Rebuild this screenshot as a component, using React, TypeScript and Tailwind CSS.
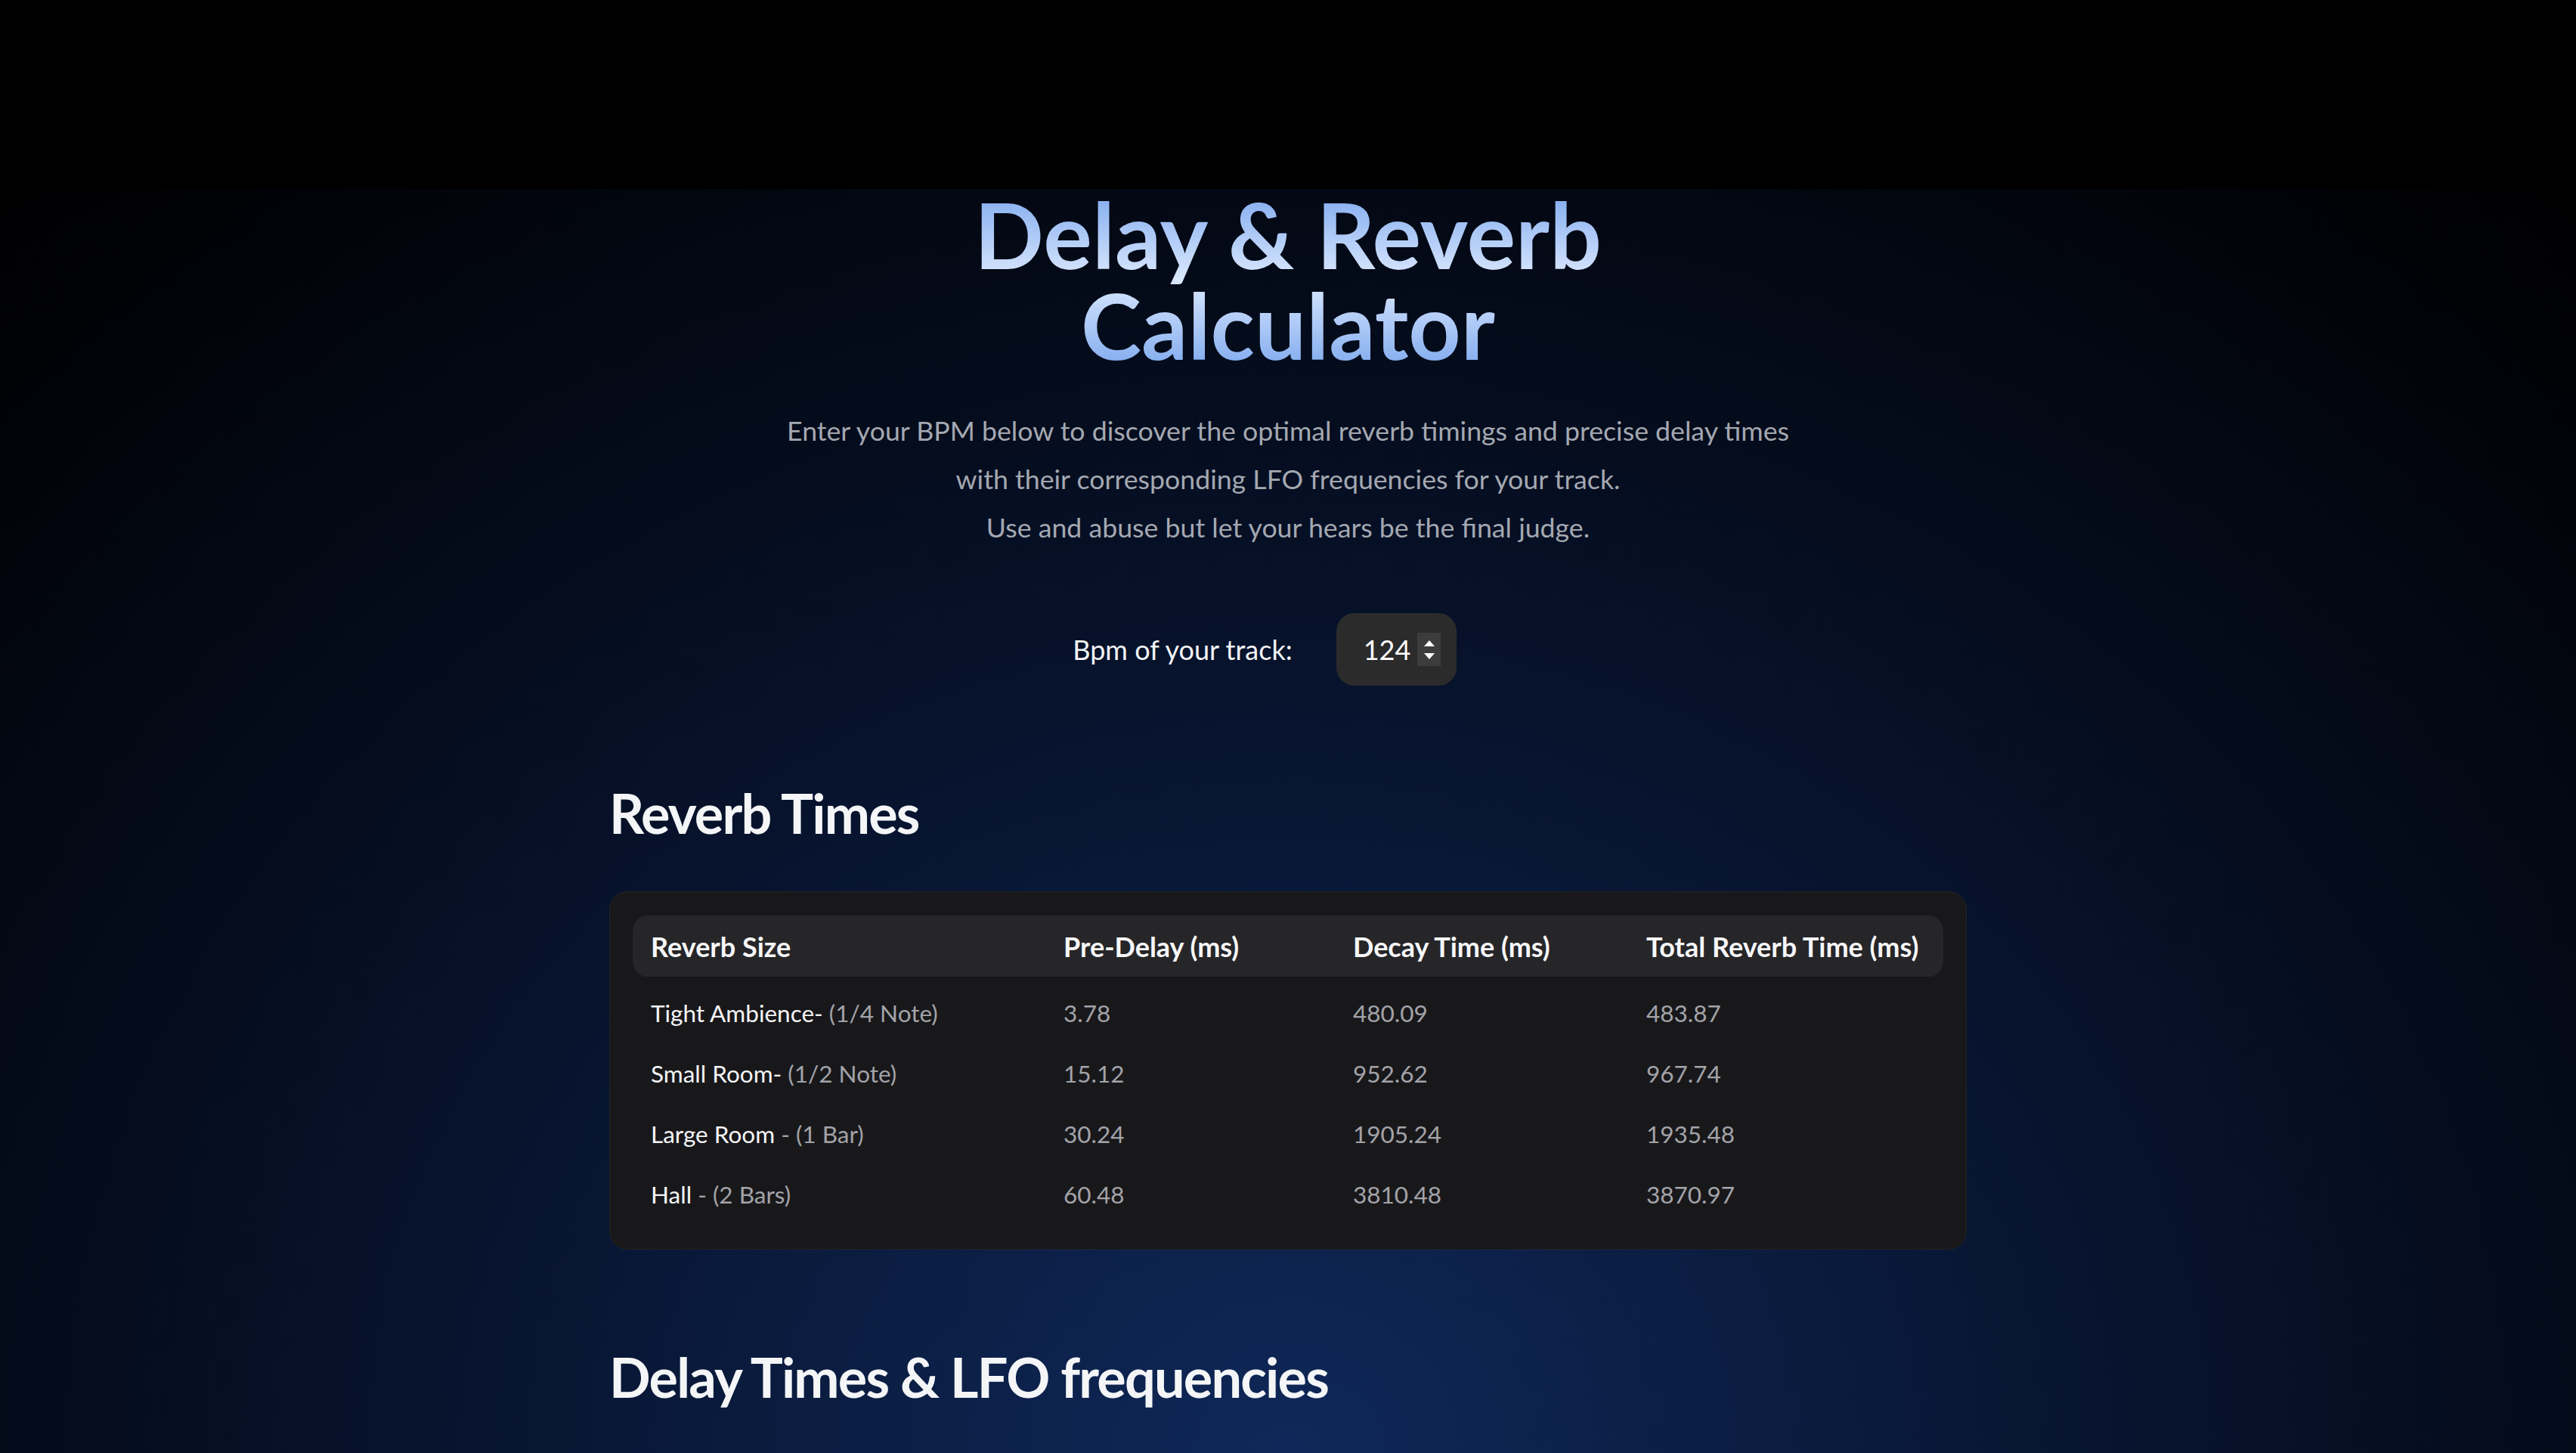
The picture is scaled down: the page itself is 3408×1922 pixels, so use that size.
import React from "react";

const rows = [
  { name: "Tight Ambience-", note: " (1/4 Note)", pre: "3.78", decay: "480.09", total: "483.87" },
  { name: "Small Room-", note: " (1/2 Note)", pre: "15.12", decay: "952.62", total: "967.74" },
  { name: "Large Room", note: " - (1 Bar)", pre: "30.24", decay: "1905.24", total: "1935.48" },
  { name: "Hall", note: " - (2 Bars)", pre: "60.48", decay: "3810.48", total: "3870.97" },
];

export default function App() {
  return (
    <div className="h-[1922px] overflow-hidden bg-black font-['Lato',sans-serif]">
      <div className="h-[250px] bg-black" />
      <main className="h-[1672px] bg-[radial-gradient(ellipse_2600px_2300px_at_50%_100%,#0f2859_0%,#081531_40%,#040b1a_65%,#010206_90%,#000000_100%)]">
        <h1 className="mx-auto w-fit bg-gradient-to-b from-[#7fa9ee] via-[#dbe8fd] to-[#7fa9ee] bg-clip-text text-center text-[121px] font-bold leading-[120px] text-transparent">
          Delay &amp; Reverb
          <br />
          Calculator
        </h1>
        <p className="mt-[48px] text-center text-[35.7px] leading-[64px] text-[#a4a8b1]">
          Enter your BPM below to discover the optimal reverb timings and precise delay times
          <br />
          with their corresponding LFO frequencies for your track.
          <br />
          Use and abuse but let your hears be the final judge.
        </p>
        <div className="mt-[81px] flex items-center justify-center pr-[62px]">
          <label className="text-[36px] text-[#f1f3f6]">Bpm of your track:</label>
          <div className="ml-[58px] flex h-[96px] w-[159px] items-center rounded-[24px] bg-[#2b2b2c] pl-[36px]">
            <span className="text-[36px] leading-none text-white">124</span>
            <div className="ml-[9px] flex h-[44px] w-[31px] flex-col items-center justify-center gap-[9px] bg-[#3c3c3d]">
              <svg width="14" height="8" viewBox="0 0 14 8">
                <polygon points="7,0 14,8 0,8" fill="#ffffff" />
              </svg>
              <svg width="14" height="8" viewBox="0 0 14 8">
                <polygon points="0,0 14,0 7,8" fill="#ffffff" />
              </svg>
            </div>
          </div>
        </div>

        <section className="mx-auto mt-[128px] w-[1796px]">
          <h2 className="text-[72px] font-bold leading-[80px] tracking-[-0.025em] text-[#f4f5f7]">Reverb Times</h2>
          <div className="mt-[64px] rounded-[24px] border border-[#232327] bg-[#18181b] px-[30px] pt-[31px] pb-[31px]">
            <div className="grid h-[81px] grid-cols-[546px_383px_388px_1fr] items-center rounded-[20px] bg-[#262629] text-[36px] font-bold text-[#f7f7f8]">
              <div className="px-[24px]">Reverb Size</div>
              <div className="px-[24px]">Pre-Delay (ms)</div>
              <div className="px-[24px]">Decay Time (ms)</div>
              <div className="px-[24px]">Total Reverb Time (ms)</div>
            </div>
            <div className="pt-[9px]">
              {rows.map((r) => (
                <div
                  key={r.name}
                  className="grid h-[80px] grid-cols-[546px_383px_388px_1fr] items-center text-[31.5px] text-[#a3a3a8]"
                >
                  <div className="px-[24px]">
                    <span className="text-[#f4f4f5]">{r.name}</span>
                    <span>{r.note}</span>
                  </div>
                  <div className="px-[24px]">{r.pre}</div>
                  <div className="px-[24px]">{r.decay}</div>
                  <div className="px-[24px]">{r.total}</div>
                </div>
              ))}
            </div>
          </div>
          <h2 className="mt-[128px] text-[72px] font-bold leading-[80px] tracking-[-0.025em] text-[#f4f5f7]">
            Delay Times &amp; LFO frequencies
          </h2>
        </section>
      </main>
    </div>
  );
}
